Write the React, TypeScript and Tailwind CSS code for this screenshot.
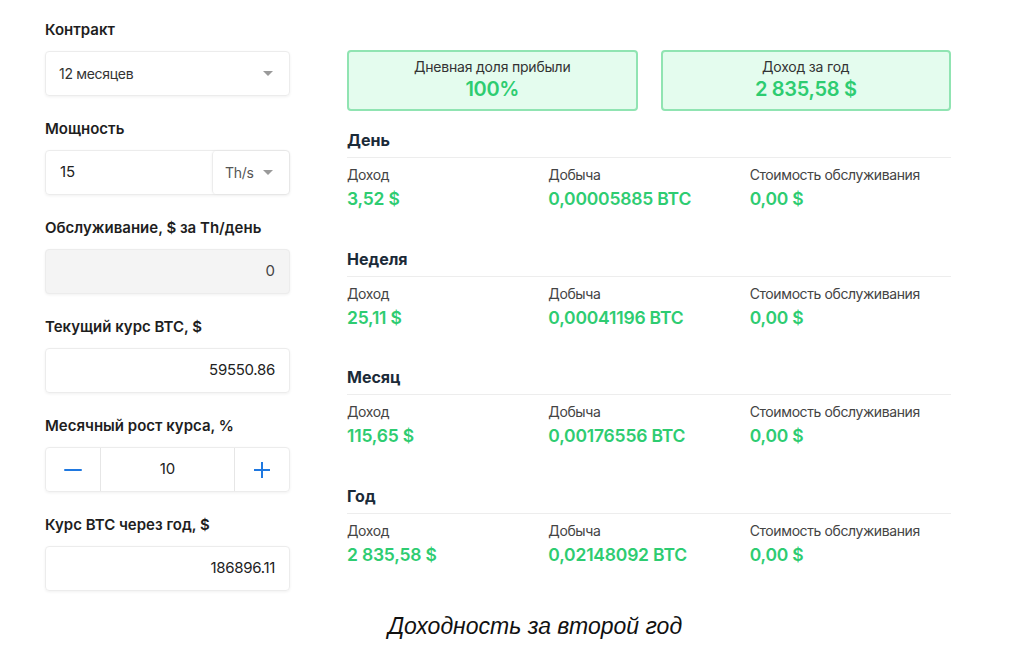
import React from "react";

const green = "text-[#2ecc71]";

function Caret() {
  return (
    <svg width="10" height="6" viewBox="0 0 10 6" className="shrink-0">
      <path d="M0 0 L10 0 L5 5 Z" fill="#9a9a9a" />
    </svg>
  );
}

function Label({ children }: { children: React.ReactNode }) {
  return <div className="text-[15px] font-semibold text-[#1e1e1e] leading-5 mb-[11px]">{children}</div>;
}

const box = "h-[45px] rounded-[4px] border border-[#ececec] shadow-[0_1px_3px_rgba(0,0,0,0.06)]";

function Section({ title, vals }: { title: string; vals: [string, string, string] }) {
  const labels = ["Доход", "Добыча", "Стоимость обслуживания"];
  return (
    <div className="h-[118.5px]">
      <div className="text-[16px] font-bold text-[#1b2a38] leading-5 pb-[7px] border-b border-[#ededed]">{title}</div>
      <div className="grid grid-cols-3 pt-[7px]">
        {labels.map((l, i) => (
          <div key={l}>
            <div className="text-[14px] text-[#444] leading-5 tracking-[-0.4px]">{l}</div>
            <div className={`text-[17.5px] font-semibold ${green} leading-5 mt-[4px] tracking-[-0.2px]`}>{vals[i]}</div>
          </div>
        ))}
      </div>
    </div>
  );
}

export default function App() {
  return (
    <div
      className="w-[1024px] h-[661px] bg-white relative overflow-hidden"
      style={{ fontFamily: "Inter, 'Noto Sans', sans-serif" }}
    >
      <div className="flex pl-[45px] pt-[20px]">
        <div className="w-[245px] flex flex-col">
          <Label>Контракт</Label>
          <div className={`${box} flex items-center justify-between px-[13px] pr-[16px]`}>
            <span className="text-[14px] text-[#333] tracking-[-0.3px]">12 месяцев</span>
            <Caret />
          </div>

          <div className="mt-[23px]"><Label>Мощность</Label></div>
          <div className={`${box} flex`}>
            <div className="flex-1 flex items-center px-[14px] text-[15px] text-[#222]">15</div>
            <div className="w-[77px] h-full flex items-center justify-between pl-[12px] pr-[16px] border-l border-[#ececec] rounded-[4px] shadow-[0_0_3px_rgba(0,0,0,0.06)]">
              <span className="text-[14px] text-[#555] tracking-[-0.3px]">Th/s</span>
              <Caret />
            </div>
          </div>

          <div className="mt-[23px]"><Label>Обслуживание, $ за Th/день</Label></div>
          <div className={`${box} bg-[#f4f4f4] flex items-center justify-end px-[14px] text-[15px] text-[#444]`}>0</div>

          <div className="mt-[23px]"><Label>Текущий курс BTC, $</Label></div>
          <div className={`${box} flex items-center justify-end px-[14px] text-[15px] text-[#222] tracking-[-0.3px]`}>59550.86</div>

          <div className="mt-[23px]"><Label>Месячный рост курса, %</Label></div>
          <div className={`${box} flex`}>
            <div className="w-[55px] flex items-center justify-center border-r border-[#e6e6e6]">
              <div className="w-[18px] h-[2px] bg-[#1f78e0] rounded" />
            </div>
            <div className="flex-1 flex items-center justify-center text-[15px] text-[#222]">10</div>
            <div className="w-[55px] flex items-center justify-center border-l border-[#e6e6e6]">
              <svg width="18" height="18" viewBox="0 0 18 18">
                <path d="M9 1 V17 M1 9 H17" stroke="#1f78e0" strokeWidth="2" />
              </svg>
            </div>
          </div>

          <div className="mt-[23px]"><Label>Курс BTC через год, $</Label></div>
          <div className={`${box} flex items-center justify-end px-[14px] text-[15px] text-[#222] tracking-[-0.3px]`}>186896.11</div>
        </div>

        <div className="w-[604px] ml-[57px] pt-[30px]">
          <div className="grid grid-cols-2 gap-[23px]">
            {[
              ["Дневная доля прибыли", "100%"],
              ["Доход за год", "2 835,58 $"],
            ].map(([t, v]) => (
              <div key={t} className="h-[61px] rounded-[4px] border-2 border-[#90e4b2] bg-[#e4fcee] flex flex-col items-center justify-center pb-[4px]">
                <div className="text-[14px] text-[#333] leading-5 tracking-[-0.2px]">{t}</div>
                <div className={`text-[20px] font-semibold ${green} leading-6 tracking-[-0.3px]`}>{v}</div>
              </div>
            ))}
          </div>
          <div className="mt-[19px]">
            <Section title="День" vals={["3,52 $", "0,00005885 BTC", "0,00 $"]} />
            <Section title="Неделя" vals={["25,11 $", "0,00041196 BTC", "0,00 $"]} />
            <Section title="Месяц" vals={["115,65 $", "0,00176556 BTC", "0,00 $"]} />
            <Section title="Год" vals={["2 835,58 $", "0,02148092 BTC", "0,00 $"]} />
          </div>
        </div>
      </div>
      <div className="flex justify-center pl-[46px] mt-[5px]">
        <div className="text-[23px] italic text-[#111]" style={{ fontFamily: "'Liberation Sans', Arial, sans-serif" }}>
          Доходность за второй год
        </div>
      </div>
    </div>
  );
}
